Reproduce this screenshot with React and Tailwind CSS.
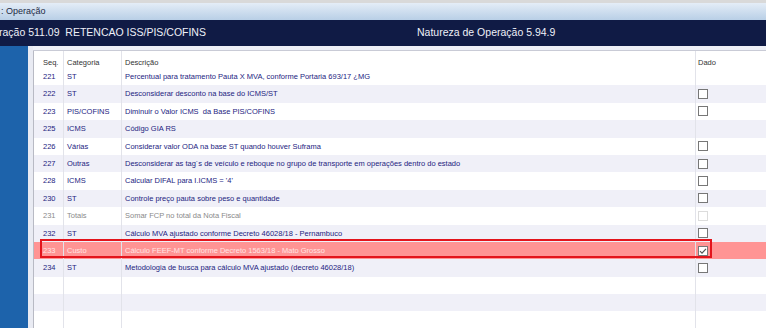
import React from "react";

const rows = [
  { seq: "221", cat: "ST", desc: "Percentual para tratamento Pauta X MVA, conforme Portaria 693/17 ¿MG", box: "none" },
  { seq: "222", cat: "ST", desc: "Desconsiderar desconto na base do ICMS/ST", box: "on" },
  { seq: "223", cat: "PIS/COFINS", desc: "Diminuir o Valor ICMS  da Base PIS/COFINS", box: "on" },
  { seq: "225", cat: "ICMS", desc: "Código GIA RS", box: "none" },
  { seq: "226", cat: "Várias", desc: "Considerar valor ODA na base ST quando houver Suframa", box: "on" },
  { seq: "227", cat: "Outras", desc: "Desconsiderar as tag´s de veículo e reboque no grupo de transporte em operações dentro do estado", box: "on" },
  { seq: "228", cat: "ICMS", desc: "Calcular DIFAL para I.ICMS = '4'", box: "on" },
  { seq: "230", cat: "ST", desc: "Controle preço pauta sobre peso e quantidade", box: "on" },
  { seq: "231", cat: "Totais", desc: "Somar FCP no total da Nota Fiscal", box: "off", disabled: true },
  { seq: "232", cat: "ST", desc: "Cálculo MVA ajustado conforme Decreto 46028/18 - Pernambuco", box: "on" },
  { seq: "233", cat: "Custo", desc: "Cálculo FEEF-MT conforme Decreto 1563/18 - Mato Grosso", box: "checked", selected: true },
  { seq: "234", cat: "ST", desc: "Metodologia de busca para cálculo MVA ajustado (decreto 46028/18)", box: "on" },
  { seq: "", cat: "", desc: "", box: "none" },
  { seq: "", cat: "", desc: "", box: "none" },
  { seq: "", cat: "", desc: "", box: "none" },
];

function Check({ kind }) {
  if (kind === "none") return null;
  if (kind === "off")
    return <div className="w-[10px] h-[10px] border border-[#dcdcdc] bg-white" />;
  return (
    <div className="w-[10px] h-[10px] border border-[#777] bg-white flex items-center justify-center">
      {kind === "checked" && (
        <svg width="8" height="8" viewBox="0 0 8 8">
          <path d="M1 4.2 L3 6.2 L7 1.8" fill="none" stroke="#555" strokeWidth="1.2" />
        </svg>
      )}
    </div>
  );
}

export default function App() {
  return (
    <div
      className="w-[766px] h-[328px] overflow-hidden bg-white flex flex-col"
      style={{ fontFamily: '"Liberation Sans", Arial, sans-serif' }}
    >
      {/* title bar */}
      <div className="h-[20px] shrink-0 border-t-[3px] border-[#d9d9d9] bg-gradient-to-b from-[#e4edf7] to-[#b9cfe6] flex items-center">
        <span className="text-[9px] text-[#1c2a44] pl-[1px]">: Operação</span>
      </div>

      {/* navy header */}
      <div className="h-[26px] shrink-0 bg-[#101b45] flex items-center text-[#eef0f8] text-[10.5px]">
        <span className="w-[418px] -ml-[1px] whitespace-pre">ração 511.09  RETENCAO ISS/PIS/COFINS</span>
        <span>Natureza de Operação 5.94.9</span>
      </div>

      <div className="flex flex-1 min-h-0">
        <div className="w-[28px] bg-[#1d63ab]" />
        <div className="w-[5px] bg-[#e9ebf3]" />
        <div className="flex-1 flex flex-col bg-[#eef0f7]">
          <div className="h-[5px] shrink-0 border-b border-[#c9cbd6]" />
          <div className="flex-1 bg-white border-l border-[#b8bac4] text-[7.5px]">
            {/* header */}
            <div className="grid grid-cols-[30px_58px_574px_1fr] h-[17px] text-[#333] bg-white">
              <div className="pl-[9px] pt-[6px] border-r border-[#e2e3ea]">Seq.</div>
              <div className="pl-[3px] pt-[6px] border-r border-[#e2e3ea]">Categoria</div>
              <div className="pl-[3px] pt-[6px] border-r border-[#e2e3ea]">Descrição</div>
              <div className="pl-[2px] pt-[6px]">Dado</div>
            </div>
            {rows.map((r, i) => {
              const shaded = i % 2 === 1;
              const bg = r.selected ? "bg-[#ff9494]" : shaded ? "bg-[#f0f0f8]" : "bg-white";
              const color = r.selected ? "text-[#ffe4e4]" : r.disabled ? "text-[#8a8a8a]" : "text-[#23237f]";
              return (
                <div
                  key={i}
                  className={`relative grid grid-cols-[30px_58px_574px_1fr] h-[17.4px] items-center ${bg} ${color}`}
                >
                  <div className="pl-[9px] h-full flex items-center border-r border-[#e2e3ea]">{r.seq}</div>
                  <div className="pl-[3px] h-full flex items-center border-r border-[#e2e3ea]">{r.cat}</div>
                  <div className="pl-[3px] h-full flex items-center border-r border-[#e2e3ea] whitespace-pre">{r.desc}</div>
                  <div className="pl-[2px] h-full flex items-center">
                    <Check kind={r.box} />
                  </div>
                  {r.selected && (
                    <div className="absolute left-[6px] top-[-3px] w-[672px] h-[19px] border-2 border-[#e3141c]" />
                  )}
                </div>
              );
            })}
          </div>
        </div>
      </div>
    </div>
  );
}
